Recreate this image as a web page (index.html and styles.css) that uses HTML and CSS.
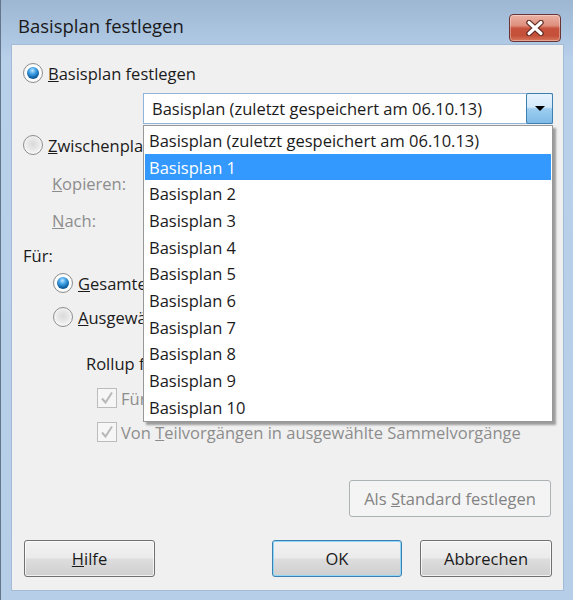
FILE: index.html
```html
<!DOCTYPE html>
<html lang="de">
<head>
    <meta charset="UTF-8">
    <title>Basisplan festlegen</title>
    <link rel="stylesheet" href="styles.css">
</head>
<body>
    <div class="window">
        <div class="titlebar">
            <span class="title">Basisplan festlegen</span>
            <button class="close" aria-label="Schließen">
                <svg width="20" height="16" viewBox="0 0 20 16">
                    <path d="M4 2.5 L16 13.5 M16 2.5 L4 13.5" stroke="#5e2a22" stroke-width="5.5" stroke-linecap="round"/>
                    <path d="M4 2.5 L16 13.5 M16 2.5 L4 13.5" stroke="#fff" stroke-width="3.2" stroke-linecap="round"/>
                </svg>
            </button>
        </div>

        <div class="client">
            <div class="row plan">
                <span class="radio checked"></span>
                <span><u>B</u>asisplan festlegen</span>
            </div>

            <div class="combo-row">
                <div class="combo">
                    <span class="combo-text">Basisplan (zuletzt gespeichert am 06.10.13)</span>
                    <span class="combo-btn"><span class="arrow"></span></span>
                </div>
            </div>

            <div class="row interim">
                <span class="radio"></span>
                <span><u>Z</u>wischenplan festlegen</span>
            </div>
            <div class="row indent disabled copy"><span><u>K</u>opieren:</span></div>
            <div class="row indent disabled into"><span><u>N</u>ach:</span></div>

            <div class="row for"><span>Für:</span></div>
            <div class="row scope whole">
                <span class="radio checked"></span>
                <span><u>G</u>esamtes Projekt</span>
            </div>
            <div class="row scope selected">
                <span class="radio"></span>
                <span><u>A</u>usgewählte Vorgänge</span>
            </div>

            <div class="row rollup"><span>Rollup für Basispläne:</span></div>
            <div class="row check first disabled">
                <span class="checkbox">
                    <svg width="18" height="18" viewBox="0 0 18 18"><path d="M4 9.5 L7.5 13.5 L14 3.5" fill="none" stroke="#b9b9b9" stroke-width="2"/></svg>
                </span>
                <span>Für alle Sammelvorgänge</span>
            </div>
            <div class="row check second disabled">
                <span class="checkbox">
                    <svg width="18" height="18" viewBox="0 0 18 18"><path d="M4 9.5 L7.5 13.5 L14 3.5" fill="none" stroke="#b9b9b9" stroke-width="2"/></svg>
                </span>
                <span>Von <u>T</u>eilvorgängen in ausgewählte Sammelvorgänge</span>
            </div>

            <div class="defaults">
                <button class="btn btn-disabled">Als <u>S</u>tandard festlegen</button>
            </div>

            <div class="actions">
                <button class="btn help"><u>H</u>ilfe</button>
                <div class="action-group">
                    <button class="btn ok">OK</button>
                    <button class="btn cancel">Abbrechen</button>
                </div>
            </div>

            <!-- open list of the combo box, lies over the dialog -->
            <ul class="dropdown">
                <li>Basisplan (zuletzt gespeichert am 06.10.13)</li>
                <li class="active">Basisplan 1</li>
                <li>Basisplan 2</li>
                <li>Basisplan 3</li>
                <li>Basisplan 4</li>
                <li>Basisplan 5</li>
                <li>Basisplan 6</li>
                <li>Basisplan 7</li>
                <li>Basisplan 8</li>
                <li>Basisplan 9</li>
                <li>Basisplan 10</li>
            </ul>
        </div>
    </div>
</body>
</html>
```

FILE: styles.css
```css
:root {
    --text: #1b1b1b;
    --disabled: #8d8d8d;
    --face: #f0f0f0;
}

body {
    margin: 0;
    background: #b7cfe8;
    font-family: "Open Sans", "Noto Sans", sans-serif;
    font-size: 16.5px;
    color: var(--text);
}

button {
    font: inherit;
}

.window {
    width: 573px;
    height: 600px;
    box-sizing: border-box;
    padding: 0 10px 10px 12px;
    background: linear-gradient(180deg, #9db7d3 0%, #aec7e2 40px, #b8d0ea 60px, #b6cee8 100%);
    border-left: 1px solid #63768a;
    padding-left: 11px;
    display: flex;
    flex-direction: column;
}

.titlebar {
    height: 45px;
    display: flex;
    align-items: flex-end;
    justify-content: space-between;
}

.title {
    font-size: 18.5px;
    color: #1a1a1a;
    padding-left: 6px;
    padding-bottom: 7px;
}

.close {
    width: 52px;
    height: 28px;
    margin: 0 2px 3px 0;
    padding: 0;
    border: 1px solid #6a3434;
    border-radius: 4px;
    background: linear-gradient(180deg, #ecb3a6 0%, #de8f7c 40%, #c6513c 52%, #c4503a 80%, #d77a5f 100%);
    box-shadow: inset 0 0 0 1px rgba(255, 255, 255, 0.35);
    display: flex;
    align-items: center;
    justify-content: center;
}

.client {
    position: relative;
    flex: 1;
    background: var(--face);
    box-shadow: 0 0 0 1px #a3bbd6;
    padding-top: 15px;
}

.row {
    height: 26px;
    display: flex;
    align-items: center;
    gap: 5px;
    white-space: nowrap;
}

.plan { padding-left: 11px; }
.interim { padding-left: 11px; margin-top: 8px; }
.indent { padding-left: 40px; }
.copy { margin-top: 12px; }
.into { margin-top: 11px; }
.for { padding-left: 11px; margin-top: 9px; }
.scope { padding-left: 41px; }
.whole { margin-top: 2px; }
.selected { margin-top: 8px; }
.rollup { padding-left: 74px; margin-top: 20px; }
.check { padding-left: 85px; gap: 4px; }
.check.first { margin-top: 9px; }
.check.second { margin-top: 8px; }

.disabled {
    color: var(--disabled);
}

.radio {
    width: 20px;
    height: 20px;
    box-sizing: border-box;
    border-radius: 50%;
    border: 1px solid #8b8d8f;
    background: radial-gradient(circle at 50% 45%, #d9d9d9 0%, #e9e9e9 45%, #fafafa 75%, #ffffff 100%);
    display: flex;
    align-items: center;
    justify-content: center;
    flex-shrink: 0;
}

.radio.checked {
    background: radial-gradient(circle, #ffffff 55%, #e6e6e6 100%);
}

.radio.checked::after {
    content: '';
    width: 12px;
    height: 12px;
    border-radius: 50%;
    background: radial-gradient(circle at 45% 30%, #c4e8ff 0%, #49a8ea 30%, #1064a8 65%, #07325f 100%);
}

.checkbox {
    width: 20px;
    height: 20px;
    box-sizing: border-box;
    border: 1px solid #bcbcbc;
    background: #f6f6f6;
    display: flex;
    align-items: center;
    justify-content: center;
    flex-shrink: 0;
}

.combo-row {
    margin-top: 7px;
    padding-left: 131px;
    padding-right: 10px;
}

.combo {
    height: 31px;
    box-sizing: border-box;
    border: 1px solid #8fb5dc;
    background: #fff;
    display: flex;
    align-items: center;
}

.combo-text {
    flex: 1;
    padding-left: 8px;
    white-space: nowrap;
}

.combo-btn {
    width: 27px;
    height: 31px;
    margin: -1px -1px -1px 0;
    box-sizing: border-box;
    border: 1px solid #3c7fb1;
    border-radius: 2px;
    background: linear-gradient(180deg, #e6f3fd 0%, #d3e9fa 45%, #9ccdf0 52%, #7fbbe6 100%);
    display: flex;
    align-items: center;
    justify-content: center;
}

.arrow {
    width: 0;
    height: 0;
    border-left: 5px solid transparent;
    border-right: 5px solid transparent;
    border-top: 5px solid #000;
}

.defaults {
    margin-top: 35px;
    padding-right: 12px;
    display: flex;
    justify-content: flex-end;
}

.btn {
    height: 37px;
    padding: 0;
    box-sizing: border-box;
    border: 1px solid #707070;
    border-radius: 3px;
    color: var(--text);
    background: linear-gradient(180deg, #f2f2f2 0%, #ebebeb 48%, #dddddd 52%, #cfcfcf 100%);
    box-shadow: inset 0 0 0 1px rgba(255, 255, 255, 0.7);
}

.btn-disabled {
    width: 202px;
    color: #838383;
    border-color: #adb2b5;
    background: #f4f4f4;
    box-shadow: none;
}

.actions {
    margin-top: 23px;
    padding: 0 11px 0 12px;
    display: flex;
    justify-content: space-between;
}

.action-group {
    display: flex;
    gap: 18px;
}

.help { width: 131px; }
.ok {
    width: 130px;
    border-color: #3c7fb1;
    box-shadow: inset 0 0 0 1px #8fd7f7;
}
.cancel { width: 132px; }

.dropdown {
    position: absolute;
    left: 131px;
    top: 80px;
    width: 410px;
    height: 297px;
    box-sizing: border-box;
    margin: 0;
    padding: 1px;
    list-style: none;
    background: #fff;
    border: 1px solid #989898;
    box-shadow: 3px 3px 2px rgba(0, 0, 0, 0.35);
}

.dropdown li {
    height: 26.7px;
    padding-left: 4px;
    display: flex;
    align-items: center;
    white-space: nowrap;
}

.dropdown li.active {
    background: #3399ff;
    color: #fff;
}
```
